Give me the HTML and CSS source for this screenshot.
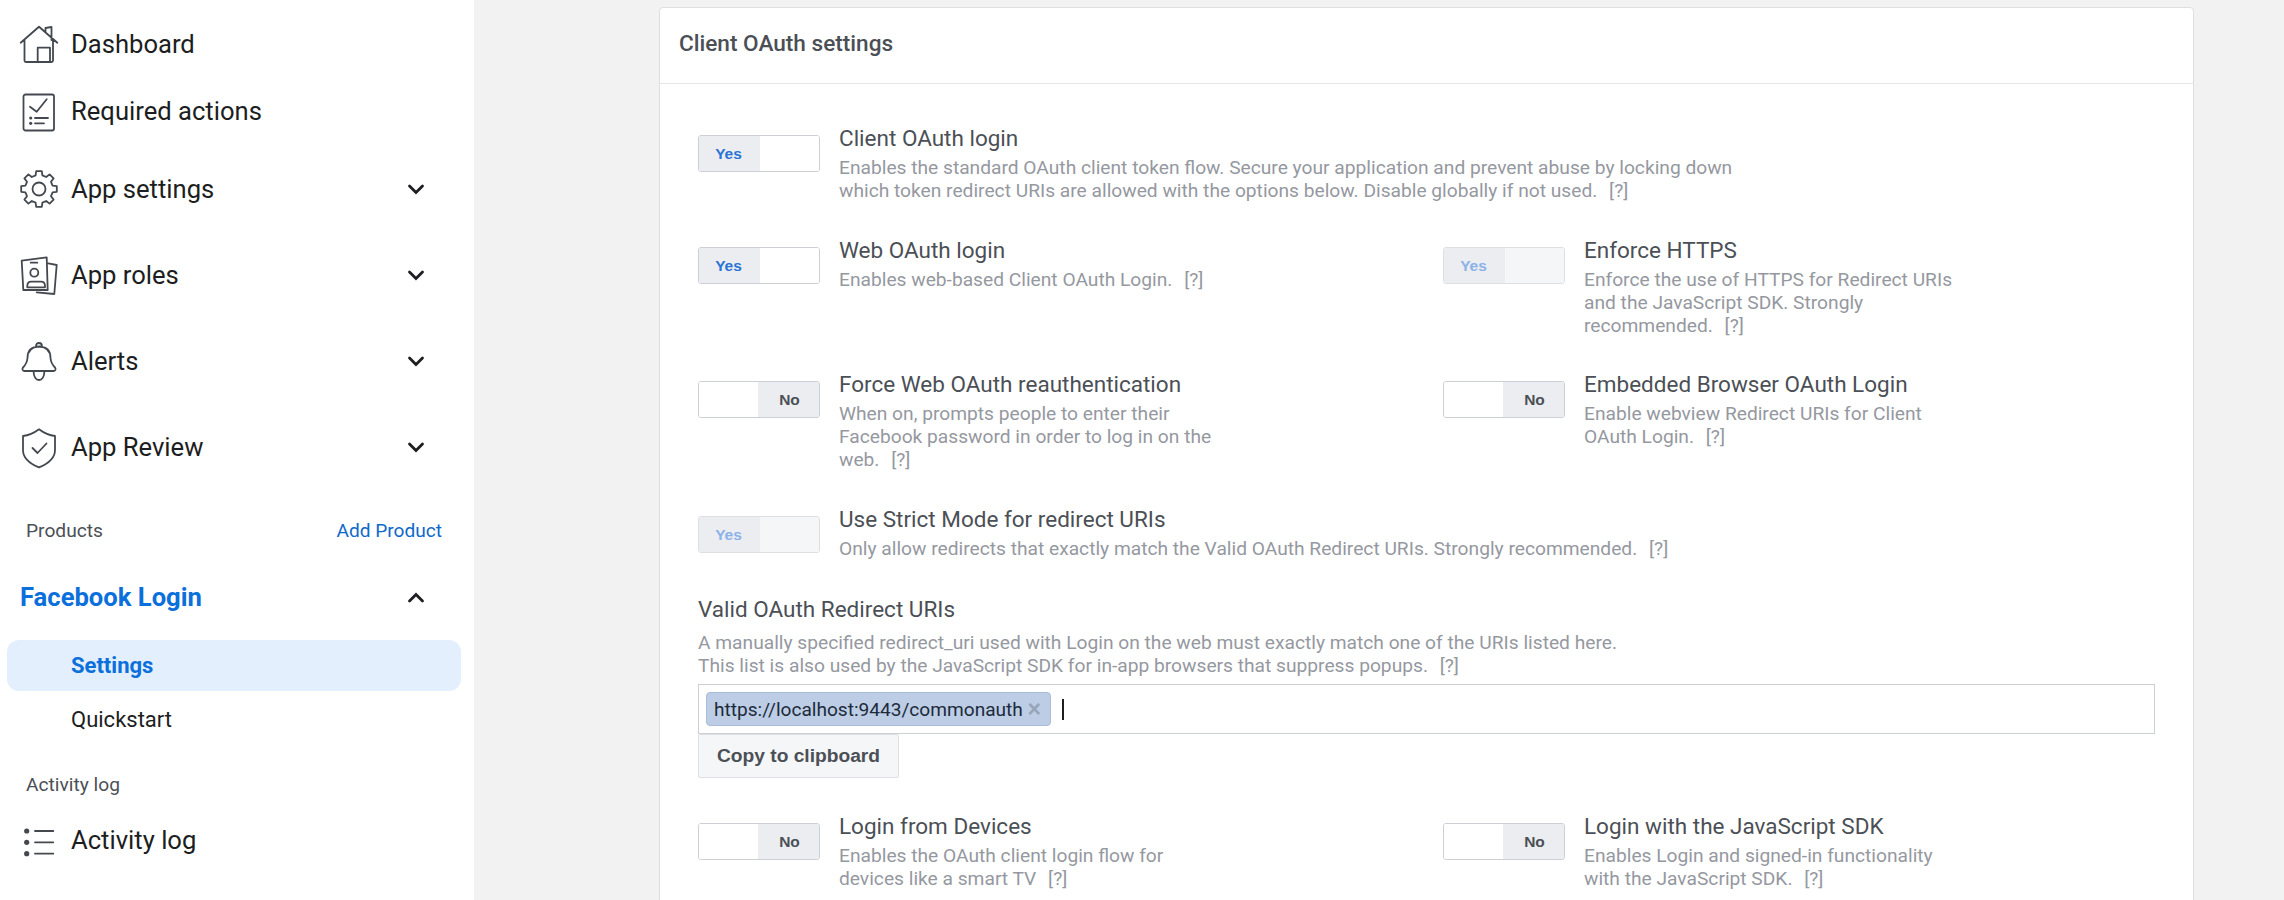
FILE: index.html
```html
<!DOCTYPE html>
<html lang="en">
<head>
<meta charset="utf-8">
<title>Client OAuth settings</title>
<link rel="stylesheet" href="styles.css">
</head>
<body>
<div class="page">
  <nav class="sidebar">
    <a class="nav-item first">
      <svg class="nav-icon" viewBox="0 0 38 38"><path d="M0.700 17.700 19 1.700 37.300 17.700M4.500 14.500V35.500q0 1.500 1.500 1.500h25.500q1.500 0 1.500-1.500V14.500M17.700 37V22.700H30V37M25.500 7V3l6-1v13"/></svg>
      <span>Dashboard</span>
    </a>
    <a class="nav-item second">
      <svg class="nav-icon" viewBox="0 0 38 38"><rect x="3.500" y="2.500" width="30.500" height="36" rx="2"/><path d="M10 14.700l6.700 5 10-12.400M15 26h13M15 31.300h9"/><circle class="dot" cx="10.700" cy="26" r="1.600"/><circle class="dot" cx="10.700" cy="31.300" r="1.600"/></svg>
      <span>Required actions</span>
    </a>
    <a class="nav-item group settings-row">
      <svg class="nav-icon" viewBox="0 0 38 38"><circle cx="19" cy="19" r="6.500"/><path d="M15.600 5.400 16.200 1.200H21.800L22.400 5.400 26.200 7 29.600 4.400 33.600 8.400 31 11.800 32.600 15.600 36.800 16.200V21.800L32.600 22.400 31 26.200 33.600 29.600 29.600 33.600 26.200 31 22.400 32.600 21.800 36.800H16.200L15.600 32.600 11.800 31 8.400 33.600 4.400 29.600 7 26.200 5.400 22.400 1.200 21.800V16.200L5.400 15.600 7 11.800 4.400 8.400 8.400 4.400 11.800 7z"/></svg>
      <span>App settings</span>
      <svg class="chevron" viewBox="0 0 16 11"><path d="M1.500 2 8 8.500 14.500 2"/></svg>
    </a>
    <a class="nav-item group">
      <svg class="nav-icon" viewBox="0 0 38 38"><path d="M1.700 4.700 26.700 1.300 27.700 34H3.300zM10.700 6.700h6.600M28.300 7.300 36.700 9 34.300 38 16.700 36.300M7.300 31.300V30q0-4.300 4-4.300h9.700q4 0 4 4.300v1.300z"/><circle cx="14.300" cy="16.700" r="4"/></svg>
      <span>App roles</span>
      <svg class="chevron" viewBox="0 0 16 11"><path d="M1.500 2 8 8.500 14.500 2"/></svg>
    </a>
    <a class="nav-item group">
      <svg class="nav-icon" viewBox="0 0 38 38"><path d="M4 29q-2.500-1-1-3.500 4-4 4.500-9.500 0-11 11.500-11.500Q30.500 5 30.500 16q.5 5.500 4.500 9.500 1.500 2.500-1 3.500zM16 4.500q0-3.500 3-3.500t3 3.500M13.500 29q.5 9 5.500 9t5.500-9"/></svg>
      <span>Alerts</span>
      <svg class="chevron" viewBox="0 0 16 11"><path d="M1.500 2 8 8.500 14.500 2"/></svg>
    </a>
    <a class="nav-item group">
      <svg class="nav-icon" viewBox="0 0 38 38"><path d="M19 1.300q8 6 16 6.700V22q0 11-16 17.300Q3 33 3 22V8Q11 7.300 19 1.300zM12.500 20l5 5 9-9.500"/></svg>
      <span>App Review</span>
      <svg class="chevron" viewBox="0 0 16 11"><path d="M1.500 2 8 8.500 14.500 2"/></svg>
    </a>
    <div class="section-head products">
      <span>Products</span>
      <a class="add-product">Add Product</a>
    </div>
    <a class="nav-item active-group">
      <span>Facebook Login</span>
      <svg class="chevron up" viewBox="0 0 16 11"><path d="M1.500 9 8 2.500 14.500 9"/></svg>
    </a>
    <a class="sub-item current">Settings</a>
    <a class="sub-item">Quickstart</a>
    <div class="section-head activity"><span>Activity log</span></div>
    <a class="nav-item last">
      <svg class="nav-icon" viewBox="0 0 38 38"><circle class="dot" cx="6.700" cy="10" r="2.600"/><circle class="dot" cx="6.700" cy="21.300" r="2.600"/><circle class="dot" cx="6.700" cy="32.700" r="2.600"/><path d="M15 10h18.300M15 21.300h18.300M15 32.700h18.300"/></svg>
      <span>Activity log</span>
    </a>
  </nav>
  <main class="main">
    <section class="card">
      <header class="card-head">Client OAuth settings</header>
      <div class="card-body">
        <div class="row row-1">
          <div class="setting wide">
            <div class="toggle on"><b>Yes</b><i></i></div>
            <div class="copy">
              <h3>Client OAuth login</h3>
              <p>Enables the standard OAuth client token flow. Secure your application and prevent abuse by locking down<br>which token redirect URIs are allowed with the options below. Disable globally if not used. <a class="help">[?]</a></p>
            </div>
          </div>
        </div>
        <div class="row row-2">
          <div class="setting">
            <div class="toggle on"><b>Yes</b><i></i></div>
            <div class="copy">
              <h3>Web OAuth login</h3>
              <p>Enables web-based Client OAuth Login. <a class="help">[?]</a></p>
            </div>
          </div>
          <div class="setting">
            <div class="toggle on disabled"><b>Yes</b><i></i></div>
            <div class="copy">
              <h3>Enforce HTTPS</h3>
              <p>Enforce the use of HTTPS for Redirect URIs<br>and the JavaScript SDK. Strongly<br>recommended. <a class="help">[?]</a></p>
            </div>
          </div>
        </div>
        <div class="row row-3">
          <div class="setting">
            <div class="toggle off"><i></i><b>No</b></div>
            <div class="copy">
              <h3>Force Web OAuth reauthentication</h3>
              <p>When on, prompts people to enter their<br>Facebook password in order to log in on the<br>web. <a class="help">[?]</a></p>
            </div>
          </div>
          <div class="setting">
            <div class="toggle off"><i></i><b>No</b></div>
            <div class="copy">
              <h3>Embedded Browser OAuth Login</h3>
              <p>Enable webview Redirect URIs for Client<br>OAuth Login. <a class="help">[?]</a></p>
            </div>
          </div>
        </div>
        <div class="row row-4">
          <div class="setting wide">
            <div class="toggle on disabled"><b>Yes</b><i></i></div>
            <div class="copy">
              <h3>Use Strict Mode for redirect URIs</h3>
              <p>Only allow redirects that exactly match the Valid OAuth Redirect URIs. Strongly recommended. <a class="help">[?]</a></p>
            </div>
          </div>
        </div>
        <div class="uris">
          <h3>Valid OAuth Redirect URIs</h3>
          <p>A manually specified redirect_uri used with Login on the web must exactly match one of the URIs listed here.<br>This list is also used by the JavaScript SDK for in-app browsers that suppress popups. <a class="help">[?]</a></p>
          <div class="token-input">
            <span class="chip">https://localhost:9443/commonauth <span class="chip-x">×</span></span>
            <span class="caret"></span>
          </div>
          <button class="copy-btn" type="button">Copy to clipboard</button>
        </div>
        <div class="row row-5">
          <div class="setting">
            <div class="toggle off"><i></i><b>No</b></div>
            <div class="copy">
              <h3>Login from Devices</h3>
              <p>Enables the OAuth client login flow for<br>devices like a smart TV <a class="help">[?]</a></p>
            </div>
          </div>
          <div class="setting">
            <div class="toggle off"><i></i><b>No</b></div>
            <div class="copy">
              <h3>Login with the JavaScript SDK</h3>
              <p>Enables Login and signed-in functionality<br>with the JavaScript SDK. <a class="help">[?]</a></p>
            </div>
          </div>
        </div>
      </div>
    </section>
  </main>
</div>
</body>
</html>
```

FILE: styles.css
```css
* { box-sizing: border-box; }
html, body { margin: 0; height: 100%; overflow: hidden; }
body { font-family: Roboto, "Liberation Sans", sans-serif; background: #f2f2f2; color: #1c1e21; }
.page { display: flex; height: 900px; overflow: hidden; }

.sidebar { flex: 0 0 474px; background: #fff; padding: 0 13px 0 7px; display: flex; flex-direction: column; }
.nav-item { display: flex; align-items: center; height: 48px; padding-left: 13px; font-size: 25.600px; color: #1c1e21; flex: none; }
.nav-item > span { flex: 1; }
.nav-icon { width: 38px; height: 38px; margin-right: 13px; flex: none; fill: none; stroke: #444950; stroke-width: 1.800; stroke-linejoin: round; stroke-linecap: round; overflow: visible; }
.nav-icon .dot { fill: #444950; stroke: none; }
.chevron { width: 16px; height: 11px; margin-right: 37px; flex: none; fill: none; stroke: #1c1e21; stroke-width: 2.800; stroke-linecap: round; overflow: visible; }
.first { margin-top: 20px; }
.second { margin-top: 19px; }
.settings-row { margin-top: 30px; }
.group + .group { margin-top: 38px; }
.section-head { display: flex; justify-content: space-between; align-items: center; height: 24px; padding: 0 19px 0 19px; font-size: 19.200px; color: #4b4f56; flex: none; }
.products { margin-top: 47px; }
.add-product { color: #1068c8; font-size: 19.100px; }
.active-group { margin-top: 31px; font-weight: 700; color: #0b6fdc; }
.sub-item { display: flex; align-items: center; height: 51px; padding-left: 64px; font-size: 22px; color: #1c1e21; flex: none; border-radius: 12px; }
.current { margin-top: 19px; background: #e3effc; color: #0b6fdc; font-weight: 700; }
.current + .sub-item { margin-top: 3px; }
.activity { margin-top: 27px; }
.last { margin-top: 20px; }

.main { flex: 1; min-width: 0; padding: 7px 90px 0 185px; }
.card { background: #fff; border: 1px solid #dddfe2; border-radius: 4px; height: 1100px; }
.card-head { height: 76px; display: flex; align-items: center; padding: 0 0 4px 19px; font-size: 22.600px; font-weight: 500; color: #4b4f56; border-bottom: 1px solid #e5e6e9; }
.card-body { padding: 0 38px; }

.row { display: grid; grid-template-columns: 745px 1fr; }
.row-1 { margin-top: 41px; }
.row-2 { margin-top: 35px; }
.row-3 { margin-top: 34px; }
.row-4 { margin-top: 35px; }
.row-5 { margin-top: 35px; }
.setting { display: flex; align-items: flex-start; }
.setting.wide { grid-column: 1 / -1; }
.copy { margin-left: 19px; }

h3 { margin: 0; font-size: 22.500px; font-weight: 400; line-height: 26px; color: #4b4f56; }
p { margin: 5px 0 0; font-size: 19.200px; line-height: 23px; color: #95989f; }
.help { margin-left: 7px; }

.toggle { display: flex; width: 122px; height: 37px; margin-top: 10px; border: 1px solid #ccd0d5; border-radius: 3px; overflow: hidden; flex: none; font-family: "Liberation Sans", Arial, sans-serif; font-size: 15.500px; }
.toggle b { flex: 0 0 61px; display: flex; align-items: center; justify-content: center; background: #ebedf0; color: #4b4f56; }
.toggle i { flex: 1; background: #fff; }
.toggle.on b { color: #2a74d6; padding-right: 2px; }
.toggle.off b { color: #4b4f56; padding-left: 2px; }
.toggle.disabled { border-color: #dddfe2; }
.toggle.disabled b { color: #8cb2ea; background: #ebedf0; }
.toggle.disabled i { background: #f5f6f7; }

.uris { margin-top: 36px; }
.uris p { margin-top: 9px; }
.token-input { display: flex; align-items: center; height: 50px; margin-top: 7px; padding-left: 7px; border: 1px solid #ccd0d5; }
.chip { height: 34px; padding: 0 9px 0 7px; display: flex; align-items: center; background: #bdcde6; border: 1px solid #a9bddb; border-radius: 4px; font-size: 19.100px; color: #1c2b3a; white-space: pre; }
.chip-x { color: #98a4b8; font-family: "Liberation Sans", Arial, sans-serif; font-weight: 700; font-size: 23px; line-height: 1; }
.caret { width: 2px; height: 21px; background: #1c1e21; margin-left: 11px; }
.copy-btn { display: block; height: 44px; width: 201px; padding: 0; background: #f5f6f7; border: 1px solid #dddfe2; border-radius: 2px; font-family: "Liberation Sans", Arial, sans-serif; font-weight: 700; font-size: 19.200px; color: #4b4f56; }
```
